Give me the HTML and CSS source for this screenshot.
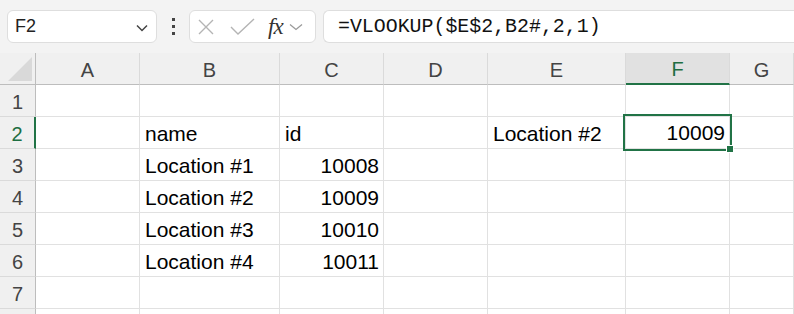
FILE: index.html
```html
<!DOCTYPE html>
<html lang="en">
<head>
  <meta charset="UTF-8">
  <title>Sheet</title>
  <link rel="stylesheet" href="styles.css">
</head>
<body>
  <div class="toolbar">
    <div class="namebox">
      <span>F2</span>
      <svg class="chev" width="12" height="8" viewBox="0 0 12 8"><path d="M1 1.5 L6 6.5 L11 1.5" fill="none" stroke="#444" stroke-width="1.5"/></svg>
    </div>
    <div class="more"><i></i><i></i><i></i></div>
    <div class="fnbox">
      <svg width="18" height="18" viewBox="0 0 18 18"><path d="M2 2 L16 16 M16 2 L2 16" stroke="#b4b4b4" stroke-width="1.4"/></svg>
      <svg class="check" width="26" height="18" viewBox="0 0 26 18"><path d="M1 9 L8 16 L24 1" fill="none" stroke="#b4b4b4" stroke-width="1.4"/></svg>
      <span class="fx">fx</span>
      <svg width="14" height="8" viewBox="0 0 14 8"><path d="M1 1.5 L7 6.5 L13 1.5" fill="none" stroke="#9a9a9a" stroke-width="1.3"/></svg>
    </div>
    <div class="formula">=VLOOKUP($E$2,B2#,2,1)</div>
  </div>

  <div class="sheet">
    <div class="hd corner"><svg width="24" height="24" viewBox="0 0 24 24"><polygon points="24,0 24,24 0,24" fill="#d9d9d9"/></svg></div>
    <div class="hd col">A</div>
    <div class="hd col">B</div>
    <div class="hd col">C</div>
    <div class="hd col">D</div>
    <div class="hd col">E</div>
    <div class="hd col sel">F</div>
    <div class="hd col">G</div>

    <div class="hd row">1</div>
    <div class="c"></div><div class="c"></div><div class="c"></div><div class="c"></div><div class="c"></div><div class="c"></div><div class="c"></div>

    <div class="hd row sel">2</div>
    <div class="c"></div><div class="c">name</div><div class="c">id</div><div class="c"></div><div class="c">Location #2</div><div class="c num active">10009</div><div class="c"></div>

    <div class="hd row">3</div>
    <div class="c"></div><div class="c">Location #1</div><div class="c num">10008</div><div class="c"></div><div class="c"></div><div class="c"></div><div class="c"></div>

    <div class="hd row">4</div>
    <div class="c"></div><div class="c">Location #2</div><div class="c num">10009</div><div class="c"></div><div class="c"></div><div class="c"></div><div class="c"></div>

    <div class="hd row">5</div>
    <div class="c"></div><div class="c">Location #3</div><div class="c num">10010</div><div class="c"></div><div class="c"></div><div class="c"></div><div class="c"></div>

    <div class="hd row">6</div>
    <div class="c"></div><div class="c">Location #4</div><div class="c num">10011</div><div class="c"></div><div class="c"></div><div class="c"></div><div class="c"></div>

    <div class="hd row">7</div>
    <div class="c"></div><div class="c"></div><div class="c"></div><div class="c"></div><div class="c"></div><div class="c"></div><div class="c"></div>

    <div class="hd row"></div>
    <div class="c"></div><div class="c"></div><div class="c"></div><div class="c"></div><div class="c"></div><div class="c"></div><div class="c"></div>
  </div>
</body>
</html>
```

FILE: styles.css
```css
body {
  margin: 0;
  width: 794px;
  height: 314px;
  overflow: hidden;
  background: #fff;
  font-family: 'Liberation Sans', Arial, sans-serif;
}
.toolbar {
  height: 53px;
  background: #f3f3f3;
  display: flex;
  align-items: flex-start;
  padding: 10px 0 0 7px;
  box-sizing: border-box;
}
.namebox, .fnbox, .formula {
  height: 33px;
  background: #fff;
  border: 1px solid #dedede;
  border-radius: 6px;
  box-sizing: border-box;
  display: flex;
  align-items: center;
}
.namebox {
  width: 150px;
  padding: 0 8px 0 7px;
  justify-content: space-between;
  font-size: 18px;
  color: #222;
}
.namebox .chev {
  margin-top: 2px;
}
.more {
  width: 32px;
  height: 33px;
  display: flex;
  flex-direction: column;
  align-items: center;
  justify-content: center;
  gap: 4px;
}
.more i {
  width: 3px;
  height: 3px;
  background: #444;
}
.fnbox {
  width: 127px;
  padding: 0 3px 0 7px;
}
.fnbox .check {
  margin-left: 15px;
}
.fx {
  font-family: 'Liberation Serif', serif;
  font-style: italic;
  font-size: 23px;
  color: #333;
  margin: 0 6px 0 12px;
  letter-spacing: -1px;
}
.formula {
  flex: 1;
  margin-left: 7px;
  border-right: none;
  border-radius: 6px 0 0 6px;
  padding-left: 14px;
  font-family: 'Liberation Mono', monospace;
  font-size: 19.9px;
  color: #111;
}
.sheet {
  display: grid;
  grid-template-columns: 36px 104px 140px 104px 104px 138px 104px 1fr;
  grid-auto-rows: 32px;
}
.hd {
  background: #f0f0f0;
  color: #444;
  font-size: 20px;
  box-sizing: border-box;
  display: flex;
  align-items: center;
  justify-content: center;
}
.corner {
  border-right: 1px solid #bdbdbd;
  border-bottom: 1px solid #bdbdbd;
  justify-content: flex-end;
  align-items: flex-end;
  padding: 0 3px 3px 0;
}
.col {
  border-right: 1px solid #dadada;
  border-bottom: 1px solid #bdbdbd;
  padding-top: 3px;
}
.col.sel {
  background: #e1e1e1;
  color: #1e6e42;
  border-bottom: 2px solid #217346;
}
.row {
  border-right: 1px solid #bdbdbd;
  border-bottom: 1px solid #dadada;
  padding-top: 3px;
}
.row.sel {
  color: #1e6e42;
  border-right: 2px solid #217346;
}
.c {
  border-right: 1px solid #e1e1e1;
  border-bottom: 1px solid #e1e1e1;
  box-sizing: border-box;
  font-size: 21px;
  color: #000;
  line-height: 32px;
  padding: 1px 0 0 5px;
  white-space: nowrap;
}
.c.num {
  text-align: right;
  padding: 1px 4px 0 0;
}
.c.active {
  position: relative;
  outline: 2px solid #217346;
  margin: -1px 0 0 -1px;
}
.c.active::after {
  content: "";
  position: absolute;
  right: -5px;
  bottom: -5px;
  width: 6px;
  height: 6px;
  background: #217346;
  border: 1px solid #fff;
}
```
